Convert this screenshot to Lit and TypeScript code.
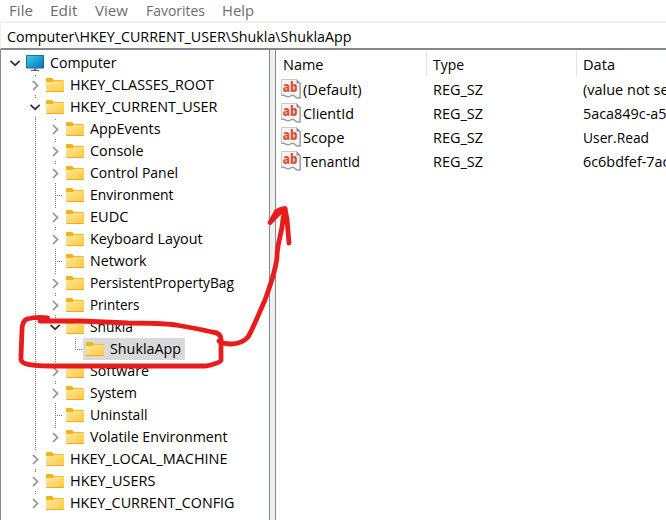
import { LitElement, html, svg, css } from "lit";
import { customElement, property } from "lit/decorators.js";

/** One line of text fitted to a given advance width. */
@customElement("fit-text")
class FitText extends LitElement {
  @property() text = "";
  @property({ type: Number }) width = 10;
  static styles = css`
    :host { display: block; flex: none; height: 22px; color: #000; }
    svg { display: block; overflow: visible; }
    text { font: 14.5px "Open Sans", "Noto Sans", sans-serif; fill: var(--ink, #000); white-space: pre; }
  `;
  render() {
    return html`<svg width=${this.width} height="22">
      <text x="0" y="16" textLength=${this.width} lengthAdjust="spacingAndGlyphs">${this.text}</text>
    </svg>`;
  }
}

type Kind = "open" | "closed" | "leaf";
interface Node { level: number; kind: Kind; label: string; width: number; last?: boolean; selected?: boolean }

const n = (level: number, kind: Kind, label: string, width: number, extra: Partial<Node> = {}): Node =>
  ({ level, kind, label, width, ...extra });

const NODES: Node[] = [
  n(0, "open", "Computer", 66.5),
  n(1, "closed", "HKEY_CLASSES_ROOT", 144),
  n(1, "open", "HKEY_CURRENT_USER", 147.5),
  n(2, "closed", "AppEvents", 70.5),
  n(2, "closed", "Console", 53.5),
  n(2, "closed", "Control Panel", 88),
  n(2, "leaf", "Environment", 83.5),
  n(2, "closed", "EUDC", 38.5),
  n(2, "closed", "Keyboard Layout", 112.5),
  n(2, "leaf", "Network", 56.5),
  n(2, "closed", "PersistentPropertyBag", 144),
  n(2, "closed", "Printers", 49.5),
  n(2, "open", "Shukla", 43),
  n(3, "leaf", "ShuklaApp", 71, { last: true, selected: true }),
  n(2, "closed", "Software", 59),
  n(2, "closed", "System", 47),
  n(2, "leaf", "Uninstall", 57.5),
  n(2, "closed", "Volatile Environment", 137.5, { last: true }),
  n(1, "closed", "HKEY_LOCAL_MACHINE", 157.5),
  n(1, "closed", "HKEY_USERS", 85.5),
  n(1, "closed", "HKEY_CURRENT_CONFIG", 164.5, { last: true }),
];

const MENU: [string, number][] = [["File", 24], ["Edit", 27.5], ["View", 33], ["Favorites", 59], ["Help", 32]];

const VALUES: [string, number, string, number][] = [
  ["(Default)", 58.5, "(value not set)", 95],
  ["ClientId", 51, "5aca849c-a5", 83.5],
  ["Scope", 41.5, "User.Read", 66],
  ["TenantId", 57, "6c6bdfef-7ac", 86.5],
];

const folder = html`<svg class="icon" width="18" height="14" viewBox="0 0 18 14">
  <defs><linearGradient id="f" x1="0" y1="0" x2="1" y2="1">
    <stop offset="0" stop-color="#ffe8a2" /><stop offset="1" stop-color="#ffc937" />
  </linearGradient></defs>
  <path d="M0 1Q0 0 1 0H6L8 2H17Q18 2 18 3V6H0Z" fill="#f5b116" />
  <path d="M0 4H6.5L8 2.8H18V13Q18 14 17 14H1Q0 14 0 13Z" fill="url(#f)" />
  <path d="M0 13H18Q18 14 17 14H1Q0 14 0 13Z" fill="#e9ac2c" />
</svg>`;

const monitor = html`<svg class="icon" width="18" height="16" viewBox="0 0 18 16">
  <defs><linearGradient id="m" x1="0" y1="0" x2="1" y2="1">
    <stop offset="0" stop-color="#37d0e6" /><stop offset="1" stop-color="#0a70c0" />
  </linearGradient></defs>
  <rect width="18" height="13.5" rx="0.8" fill="#125f91" />
  <rect x="0.8" y="0.8" width="16.4" height="11.9" fill="url(#m)" />
  <path d="M8 13.5h2v1.3h3V16H5v-1.2h3z" fill="#59636b" />
</svg>`;

const stringIcon = html`<svg class="sz" width="20" height="20" viewBox="0 0 20 20">
  <path d="M.5.5H15.5L19 4V19Q16 19.8 14 17.5Q12 15.2 9.5 17Q7 18.6 4.5 17Q2.5 15.8.5 16.5Z" fill="#f6f6f6" stroke="#c9c9c9" />
  <path d="M15.5 0V4.5H19.5Z" fill="#8f8f8f" />
  <path d="M19.2 4V19Q16 19.8 14 17.5Q12 15.2 9.5 17Q7 18.6 4.5 17Q2.5 15.8.3 16.5" fill="none" stroke="#9b9ea0" stroke-width="1.3" />
  <text class="ab" x="1.8" y="13.4" textLength="14.8" lengthAdjust="spacingAndGlyphs">ab</text>
</svg>`;

@customElement("app-root")
class AppRoot extends LitElement {
  static styles = css`
    :host { display: flex; flex-direction: column; position: relative; width: 666px; height: 520px; overflow: hidden; background: #fff; }
    .menu { display: flex; flex: none; gap: 17.5px; height: 21px; padding-left: 8.5px; --ink: #6d6d6d; }
    .address { flex: none; box-sizing: border-box; height: 29px; padding: 3px 0 0 6px; border-top: 2px solid #f0f0f0; border-left: 1px solid #f0f0f0; border-bottom: 2px solid #828790; }
    .panes { display: flex; flex: 1; min-height: 0; }
    .tree { box-sizing: border-box; width: 270px; padding-top: 2px; border-left: 1px solid #828790; border-right: 1px solid #828790; }
    .splitter { width: 5px; background: #f0f0f0; }
    .list { flex: 1; min-width: 0; border-left: 1px solid #828790; overflow: hidden; }
    .row { display: flex; height: 22px; }
    .gutter { flex: none; display: block; }
    .item { display: flex; align-items: center; box-sizing: border-box; height: 22px; padding: 0 4px 0 3px; gap: 6px; }
    .item.selected { background: #d9d9d9; border-radius: 1px; }
    .icon { flex: none; display: block; }
    .head, .value { display: grid; grid-template-columns: 151px 150px 1fr; }
    .head { height: 28px; }
    .head > div { box-sizing: border-box; height: 25px; margin-top: 1px; padding: 3px 0 0 6px; border-right: 1px solid #e5e5e5; }
    .head > div:first-child { padding-left: 7px; }
    .head > div:last-child { border-right: 0; }
    .value { height: 24px; }
    .value > div { display: flex; padding: 1px 0 0 6px; }
    .value > div:first-child { padding-left: 5px; gap: 2px; }
    .sz { flex: none; display: block; }
    .ab { font: 800 13.5px "Open Sans", sans-serif; fill: #dc5235; }
    .ink { position: absolute; inset: 0; pointer-events: none; }
  `;

  /** Connector dots and the expander to the left of an item. */
  private gutter(node: Node, index: number) {
    const width = 22 + node.level * 20;
    const dots = (x: number, from: number, to: number) =>
      svg`<path d="M${x} ${from}V${to}" stroke="#777" stroke-dasharray="1 1" />`;
    const cx = 14 + node.level * 20;
    const parts = [];
    for (let lvl = 1; lvl < node.level; lvl++) {
      const more = NODES.slice(index + 1).some(
        (x, i, rest) => x.level === lvl && !rest.slice(0, i).some((y) => y.level < lvl));
      if (more) parts.push(dots(14.5 + lvl * 20, 1, 22));
    }
    if (node.level > 0) {
      if (node.kind === "leaf") {
        parts.push(dots(cx + 0.5, 1, node.last ? 12 : 22));
        parts.push(svg`<path d="M${cx} 11.5h9" stroke="#777" stroke-dasharray="1 1" />`);
      } else {
        parts.push(dots(cx + 0.5, 1, 2));
        if (!node.last) parts.push(dots(cx + 0.5, 21, 22));
      }
    }
    if (node.kind === "open")
      parts.push(svg`<path d="M${cx - 4.5} 8.8l4.6 4.4 4.6-4.4" fill="none" stroke="#333" stroke-width="1.7" />`);
    if (node.kind === "closed")
      parts.push(svg`<path d="M${cx - 2} 7l4.5 4.5-4.5 4.5" fill="none" stroke="#929292" stroke-width="1.7" />`);
    return html`<svg class="gutter" width=${width} height="22">${parts}</svg>`;
  }

  render() {
    return html`
      <nav class="menu">${MENU.map(([t, w]) => html`<fit-text .text=${t} .width=${w}></fit-text>`)}</nav>
      <div class="address"><fit-text .text=${"Computer\\HKEY_CURRENT_USER\\Shukla\\ShuklaApp"} .width=${344.5}></fit-text></div>
      <div class="panes">
        <div class="tree">
          ${NODES.map((node, i) => html`<div class="row">${this.gutter(node, i)}
            <div class="item ${node.selected ? "selected" : ""}">
              ${node.level === 0 ? monitor : folder}
              <fit-text .text=${node.label} .width=${node.width}></fit-text>
            </div></div>`)}
        </div>
        <div class="splitter"></div>
        <div class="list">
          <div class="head">
            <div><fit-text .text=${"Name"} .width=${40.5}></fit-text></div>
            <div><fit-text .text=${"Type"} .width=${31}></fit-text></div>
            <div><fit-text .text=${"Data"} .width=${32}></fit-text></div>
          </div>
          ${VALUES.map(([name, nw, data, dw]) => html`<div class="value">
            <div>${stringIcon}<fit-text .text=${name} .width=${nw}></fit-text></div>
            <div><fit-text .text=${"REG_SZ"} .width=${50}></fit-text></div>
            <div><fit-text .text=${data} .width=${dw}></fit-text></div>
          </div>`)}
        </div>
      </div>
      <svg class="ink" width="666" height="520" fill="none" stroke="#e81c1c" stroke-width="4.8" stroke-linecap="round" stroke-linejoin="round">
        <path d="M47.5 318C40 317 31 318 27 319Q22 321 22 330L21 356Q20 362 25 363.5Q32 366 52 366L206 366Q221 363 221 360L221 339Q221 333 212 332Q200 329 176 325Q160 323 128 323L80 321L40 321" />
        <path d="M219 341Q223 344 231 344Q242 344 248 337C253 329 259 313 265 300C271 283 276 270 277 257C277 243 282 234 283 219L285 209" />
        <path d="M270 222.5L278 214Q282 211 285 209L287 219L289 243M271 221L276.5 211.5Q280 209 285 208.5" />
      </svg>`;
  }
}
